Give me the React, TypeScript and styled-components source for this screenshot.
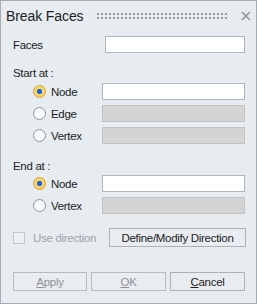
import React from "react";
import styled, { createGlobalStyle } from "styled-components";

const Global = createGlobalStyle`
  html, body { margin: 0; padding: 0; background: #e6ecf0; }
  * { box-sizing: border-box; }
`;

const Window = styled.div`
  width: 257px;
  height: 304px;
  border: 1px solid #a4adb5;
  background: #e6ecf0;
  font-family: "Liberation Sans", Arial, sans-serif;
  font-size: 11.5px;
  letter-spacing: -0.3px;
  color: #1c1c1c;
  display: flex;
  flex-direction: column;
`;

const TitleBar = styled.div`
  height: 30px;
  display: flex;
  align-items: center;
  padding: 0 5px 0 5px;
`;

const Title = styled.div`
  font-size: 14px;
  color: #222;
  letter-spacing: -0.1px;
`;

const Grip = styled.div`
  flex: 1;
  height: 6px;
  margin: 0 14px 0 13px;
  background:
    linear-gradient(to right, transparent 0 2px, #e6ecf0 2px 4px) 0 0 / 4px 4px,
    linear-gradient(to bottom, #959ea6 0 2px, transparent 2px 4px) 0 0 / 4px 4px;
`;

const Close = styled.svg`
  width: 10px;
  height: 10px;
`;

const Body = styled.div`
  display: flex;
  flex-direction: column;
  padding: 5px 11px 0 11px;
`;

const Row = styled.div<{ $indent?: number; $mt?: number }>`
  display: flex;
  align-items: center;
  height: 17px;
  margin-top: ${(p) => p.$mt ?? 0}px;
  padding-left: ${(p) => p.$indent ?? 0}px;
`;

const Label = styled.div<{ $w: number; $muted?: boolean }>`
  width: ${(p) => p.$w}px;
  flex: none;
  color: ${(p) => (p.$muted ? "#9ea3a8" : "#1c1c1c")};
  white-space: nowrap;
`;

const Section = styled.div<{ $mt: number }>`
  margin-top: ${(p) => p.$mt}px;
  height: 14px;
  line-height: 14px;
  padding-left: 1px;
`;

const Input = styled.div<{ $disabled?: boolean }>`
  flex: 1;
  height: 17px;
  border: 1px solid ${(p) => (p.$disabled ? "#c2c2c2" : "#b3b6b9")};
  background: ${(p) => (p.$disabled ? "#d4d4d4" : "#ffffff")};
`;

const RadioCircle = styled.span<{ $on?: boolean }>`
  width: 13px;
  height: 13px;
  border-radius: 50%;
  flex: none;
  margin-right: 5px;
  border: 1px solid ${(p) => (p.$on ? "#d9a72c" : "#8f9397")};
  background: ${(p) =>
    p.$on
      ? "radial-gradient(circle, #1f63d6 0 2.4px, #f7d97a 2.9px, #f2c64a 100%)"
      : "linear-gradient(#f4f5f6, #ffffff)"};
`;

const Check = styled.span`
  width: 12px;
  height: 12px;
  flex: none;
  border: 1px solid #c3c7cb;
  background: #eef1f4;
  margin-right: 8px;
`;

const Button = styled.div<{ $w: number; $disabled?: boolean }>`
  width: ${(p) => p.$w}px;
  height: 19px;
  border: 1px solid ${(p) => (p.$disabled ? "#b6bbbf" : "#aeb1b4")};
  background: #e9edf1;
  color: ${(p) => (p.$disabled ? "#8e9296" : "#1c1c1c")};
  display: flex;
  align-items: center;
  justify-content: center;
  flex: none;
  u { text-decoration: underline; text-underline-offset: 1px; }
`;

const ButtonRow = styled.div`
  display: flex;
  gap: 4px;
  margin-top: 25px;
  padding-left: 1px;
`;

const DirRow = styled.div`
  display: flex;
  align-items: center;
  margin-top: 14px;
  padding-left: 1px;
  height: 19px;
`;

type RadioProps = { label: string; on?: boolean; disabledInput?: boolean; mt?: number };
const RadioRow = ({ label, on, disabledInput, mt }: RadioProps) => (
  <Row $indent={21} $mt={mt}>
    <RadioCircle $on={on} />
    <Label $w={51}>{label}</Label>
    <Input $disabled={disabledInput} />
  </Row>
);

export default function App() {
  return (
    <>
      <Global />
      <Window>
        <TitleBar>
          <Title>Break Faces</Title>
          <Grip />
          <Close viewBox="0 0 10 10">
            <path d="M1 1 L9 9 M9 1 L1 9" stroke="#8e979f" strokeWidth="1.6" fill="none" />
          </Close>
        </TitleBar>
        <Body>
          <Row $indent={1}>
            <Label $w={92}>Faces</Label>
            <Input />
          </Row>
          <Section $mt={13}>Start at :</Section>
          <RadioRow label="Node" on mt={3} />
          <RadioRow label="Edge" disabledInput mt={5} />
          <RadioRow label="Vertex" disabledInput mt={5} />
          <Section $mt={15}>End at :</Section>
          <RadioRow label="Node" on mt={2} />
          <RadioRow label="Vertex" disabledInput mt={5} />
          <DirRow>
            <Check />
            <Label $w={76} $muted>Use direction</Label>
            <Button $w={137}>Define/Modify Direction</Button>
          </DirRow>
          <ButtonRow>
            <Button $w={74} $disabled><u>A</u>pply</Button>
            <Button $w={75} $disabled><u>O</u>K</Button>
            <Button $w={75}><u>C</u>ancel</Button>
          </ButtonRow>
        </Body>
      </Window>
    </>
  );
}
